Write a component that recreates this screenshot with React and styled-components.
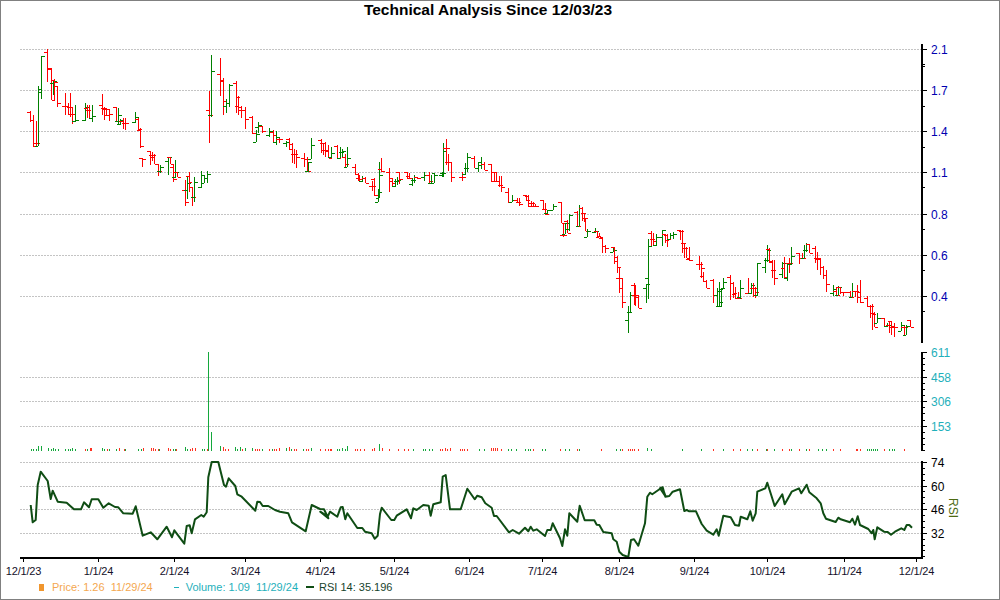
import React from "react";
import styled, { createGlobalStyle } from "styled-components";

// bars are read off 3x crops: [x, high, low, open, close], crop units
const priceCrops = [
  { ox: 0, oy: 0, bars: [
    [91,332,365,337,360],[98,345,440,360,438],[107,363,438,428,428],[113,258,438,438,268],[122,169,296,276,169],
    [142,148,245,157,205],[152,205,300,207,300],[158,243,285,250,243],[163,237,300,240,245],[172,259,320,259,310],
    [194,278,345,318,318],[203,310,345,318,322],[209,280,350,322,342],[215,322,372,342,342],[224,316,365,362,360],
    [254,310,362,360,320],[260,316,355,325,330],[267,316,357,330,355],[275,316,365,355,349],
    [305,283,345,316,325],[311,322,360,325,344],[319,325,345,328,345],[326,326,362,328,343],
    [347,320,365,320,364],[355,323,372,364,346],[361,358,375,372,360],[370,355,387,362,370],[376,355,390,370,370],
    [406,337,370,365,350],[413,355,390,357,388],[421,383,443,390,437],[427,473,500,473,476],
    [451,452,495,454,472],[457,455,482,465,465],[463,462,492,465,492],[473,492,527,492,512],[480,495,518,512,502],
    [503,470,525,482,472],[509,470,492,472,492],[518,492,545,502,537],[524,480,535,532,516],[530,516,532,516,532],
    [554,540,618,570,607],[560,530,597,569,550],[568,517,575,527,562],[575,560,617,545,592],[583,530,607,592,545],
    [604,512,563,560,525],[613,527,550,550,535],[620,512,550,535,522],[626,272,428,330,345],[634,166,350,345,214],
    [661,175,287,222,242],[670,235,345,240,303],[677,298,338,318,308],[686,252,320,308,256],
    [707,244,338,248,290],[714,288,345,318,330],[722,318,355,322,330],[736,320,387,330,358],
    [757,347,402,352,400],[767,390,427,425,402],[773,365,400,380,376],[785,378,400,378,392],
    [808,385,410,405,392],[818,390,428,397,405],[829,392,435,427,412],[838,415,428,418,418],
    [859,422,442,430,425],[868,415,450,417,432],[875,430,488,448,462],[882,448,492,462,462],[889,450,505,462,472],
    [912,460,502,475,477],[920,472,515,477,513],[925,485,515,513,485],[934,415,476,476,436],
    [962,418,458,420,430],[970,430,465,430,450],[976,425,472,450,453],[985,435,475,450,475],
  ] },
  { ox: 330, oy: 120, bars: [
    [2,82,115,112,100],[22,76,115,79,115],[31,82,115,115,95],[37,88,112,95,92],[45,102,142,112,132],[52,82,142,142,115],
    [76,133,165,142,162],[83,160,183,163,178],[87,165,183,173,183],[97,167,185,183,173],[104,172,190,175,190],
    [127,183,212,199,199],[133,175,228,178,224],[143,208,247,247,216],[148,127,233,233,166],[154,115,155,147,152],
    [178,145,215,157,175],[185,175,197,183,190],[195,178,200,197,182],[201,172,195,182,179],[207,155,192,155,178],
    [231,155,177,156,175],[237,160,177,168,175],[245,175,198,192,180],[252,165,190,180,170],[260,170,176,170,175],
    [283,157,183,172,165],[297,157,190,165,183],[304,165,190,190,160],[312,160,190,190,165],
    [335,157,172,165,160],[338,68,172,160,92],[347,58,135,83,83],[354,103,152,125,125],[362,125,185,125,172],
    [397,155,182,172,172],[404,130,165,162,143],[411,100,155,143,112],
    [433,107,143,115,143],[443,125,155,143,125],[453,112,147,135,132],[462,125,150,132,150],
    [484,133,185,133,184],[491,157,185,157,184],[498,157,185,157,184],[507,168,202,184,195],[513,167,215,195,202],
    [534,203,248,215,247],[545,225,247,247,241],[561,233,250,241,246],[566,235,258,246,251],
    [587,224,243,224,240],[595,225,260,227,257],[602,242,257,250,248],[610,245,260,250,258],[616,253,260,259,259],
    [638,241,270,241,268],[646,250,285,268,281],[652,270,283,280,270],[668,253,270,270,259],
    [692,247,308,247,308],[698,308,350,345,345],[704,308,343,343,310],[712,300,338,302,338],[718,282,332,327,285],
    [742,273,322,275,317],[748,255,318,317,263],[755,260,302,263,280],[761,280,305,280,295],[765,295,332,295,332],[770,328,352,352,332],
    [795,323,340,336,332],[800,332,350,332,347],[808,338,352,350,350],[816,355,398,355,378],[824,376,398,378,385],
    [848,383,397,397,390],[852,382,433,382,422],[860,408,458,410,440],[867,440,520,475,505],[875,475,565,475,547],
    [895,558,638,600,575],[901,515,578,575,525],[911,488,555,495,525],[916,495,558,525,530],[925,525,565,525,565],
    [947,492,548,505,492],[953,358,538,475,377],[964,333,377,338,358],[970,338,378,358,363],[977,343,377,376,352],
  ] },
  { ox: 660, oy: 220, bars: [
    [7,30,78,50,30],[15,43,70,43,60],[22,43,82,45,58],[31,38,58,58,45],[38,36,58,45,43],
    [60,30,60,31,33],[66,30,98,33,70],[72,68,115,70,85],[79,80,115,85,115],[88,82,122,118,120],
    [118,108,150,132,132],[124,125,175,132,145],[130,155,185,168,182],[139,180,205,183,203],
    [160,178,248,180,225],[170,205,260,225,212],[176,187,260,258,246],[184,205,260,258,205],[190,175,205,208,187],
    [211,165,240,170,188],[218,185,235,188,220],[225,200,238,222,235],[234,215,238,235,233],[241,180,238,232,205],
    [263,175,220,220,220],[272,188,222,220,195],[278,190,232,205,205],[286,200,233,205,215],[292,130,228,226,130],
    [316,115,160,140,120],[322,75,125,120,90],[328,85,130,86,125],[337,120,175,122,150],[343,120,195,150,175],
    [367,127,175,162,128],[373,110,175,145,172],[381,130,182,175,130],[388,115,160,128,130],[394,82,135,132,108],
    [418,98,132,100,115],[427,98,118,115,115],[433,75,115,115,90],[439,68,95,90,72],[448,72,98,73,98],
    [466,78,128,85,117],[472,97,150,115,115],[481,115,165,117,140],[490,137,178,140,165],[499,150,215,165,192],
    [520,195,228,218,208],[527,200,225,212,225],[535,198,225,225,200],[541,200,222,202,215],[550,215,228,216,216],
    [570,213,232,215,232],[577,188,232,232,212],[585,212,232,212,213],[592,195,248,213,232],[601,180,248,215,247],
    [622,228,260,235,258],[631,255,295,258,258],[637,253,330,258,282],[643,275,322,280,322],[652,278,308,308,293],
    [671,295,320,295,318],[680,310,322,318,315],[686,302,340,315,320],[692,302,345,302,318],[703,308,352,320,322],
    [724,307,332,332,315],[733,318,345,322,320],[739,315,345,345,318],[751,300,322,300,322],
  ] },
];

// g/r + crop x, optional :height in px
const volumeCrops = [
  { ox: 0, list: "g92 g98 g107 g113:5 g122:5 g143:3 g152 g158:3 g164 g173 g194 g203 g209 g215:3 g224 r254 g260 r269:3 r274:3 g305:3 g311 r320 g326 g347 r356:3 r371 g376 g413 g422 r428:3 r452:3 r458:3 r464 r473 g478 r503:3 r509 g518 g524 r529 g554:4 g560 r569 r575:3 r584:3 g605 g611 r620 g625:99 g634:19 g661:5 r670:4 r676 r685 g706:4 g712 g721:4 r727 g736:3 g757:3 r766 r772 r778 g787 r808 g817 r823 r829 r838:3 g859:3 r868:4 g874 r883 r889 g910 r919 r925 g934:3 r961 r976 r985 r991 g1012" },
  { ox: 330, list: "r2 g22 g28 g37:3 g46 g52:5 r76 r82 r91 r103 r127:2 r133:3 g148:7 r155:3 r178 r205 r223 r235 g250 g280 g286 g298 g307 r331 r337 r346:3 r352 r361:3 r391 r397 r403 r412 g448 g463 r484:3 r490:3 r496:3 r502:3 r514 g535 g544 g559 g586 g595 g601 r610 g637 g646 r691 g706 g718 r742 g748 r814 g859 g871 r877 r895 r901 r907 r913 r925 g952:3 g964:2" },
  { ox: 660, list: "g67 g124 r160 g190 r220 r241 g262 g277 r292 g317 r322 g343 r367 r388 g394 r418 g439 r448 g475 g487 g499 r520 r541 r587 r592 r601 g622 g628 g634 g640 g646 g652 r673 g688 g697 g703 r733" },
];

const rsiCrops = [
  { ox: 0, pts: [[92,195],[98,247],[107,240],[113,135],[122,95],[143,123],[152,177],[158,152],[173,185],[200,188],[210,197],[222,208],[243,208],[252,187],[267,202],[275,178],[295,178],[310,203],[326,190],[345,201],[355,202],[370,220],[398,221],[407,199],[428,287],[452,277],[472,298],[500,260],[516,292],[523,271],[553,311],[560,258],[569,256],[575,280],[585,238],[604,225],[611,230],[620,217],[625,112],[635,66],[655,66],[672,135],[678,140],[686,115],[706,138],[712,163],[725,170],[766,212],[772,185],[780,186],[788,198],[805,198],[825,210],[840,215],[865,220],[876,247],[917,274],[935,195],[960,207],[972,208],[985,235]] },
  { ox: 330, pts: [[-29,215],[-7,230],[0,215],[22,230],[32,202],[38,201],[46,238],[52,220],[82,264],[97,264],[105,275],[125,280],[134,296],[143,287],[150,222],[155,203],[184,240],[193,240],[200,227],[230,208],[243,235],[250,205],[260,210],[280,195],[296,197],[302,227],[310,193],[332,187],[338,110],[347,105],[360,208],[392,208],[412,146],[434,178],[442,167],[455,172],[466,190],[485,203],[492,228],[500,228],[537,277],[548,270],[567,281],[585,263],[595,274],[602,260],[610,272],[620,268],[645,288],[652,270],[662,270],[668,250],[690,295],[697,318],[705,268],[712,287],[718,220],[742,245],[749,197],[764,241],[793,241],[800,254],[808,255],[820,276],[845,280],[850,298],[860,305],[868,335],[878,345],[895,351],[903,300],[912,298],[925,317],[945,250],[952,170],[960,158],[967,163],[997,142],[1007,170]] },
  { ox: 660, pts: [[0,145],[8,142],[16,170],[28,168],[38,155],[60,148],[73,213],[80,210],[88,214],[108,214],[125,252],[140,272],[160,284],[170,268],[176,287],[190,227],[212,232],[225,255],[237,257],[242,230],[262,238],[271,214],[278,242],[287,220],[292,155],[316,145],[322,128],[344,198],[367,163],[374,193],[395,155],[417,145],[424,160],[440,134],[448,157],[470,175],[482,190],[490,220],[498,236],[527,246],[535,233],[542,238],[570,247],[577,236],[585,254],[593,229],[600,255],[625,267],[635,280],[640,270],[644,298],[652,262],[672,275],[683,276],[693,284],[705,275],[724,265],[733,270],[740,255],[748,255],[756,263]] },
];

const dates = [
  ["12/1/23", 23], ["1/1/24", 98], ["2/1/24", 174], ["3/1/24", 245], ["4/1/24", 320], ["5/1/24", 394], ["6/1/24", 469],
  ["7/1/24", 542], ["8/1/24", 619], ["9/1/24", 694], ["10/1/24", 767], ["11/1/24", 844], ["12/1/24", 916],
];

const AXIS_X = 921;

const GlobalStyle = createGlobalStyle`
  html, body {
    margin: 0;
    background: #fff;
  }
`;

const Frame = styled.div`
  box-sizing: border-box;
  width: 1000px;
  height: 600px;
  border: 1px solid #808080;
  display: flex;
  flex-direction: column;
  background: #fff;
  font-family: "Liberation Sans", Arial, sans-serif;
  overflow: hidden;
`;

const Title = styled.h1`
  margin: 0;
  height: 19px;
  padding-right: 24px;
  font-size: 15.5px;
  line-height: 18px;
  font-weight: bold;
  text-align: center;
  color: #000;
`;

const Pane = styled.svg`
  display: block;
  width: 998px;
  flex: none;
  font-family: "Liberation Sans", Arial, sans-serif;
`;

const AxisLabel = styled.text`
  font-size: 12px;
  fill: ${(p) => p.$color};
`;

const DateLabel = styled.text`
  font-size: 11px;
  letter-spacing: -0.2px;
  text-anchor: middle;
  fill: #14102a;
`;

const SideLabel = styled.text`
  font-size: 12px;
  text-anchor: middle;
  fill: #4d6a12;
`;

const Legend = styled.div`
  flex: 1;
  display: flex;
  align-items: center;
  gap: 7px;
  padding: 0 0 3px 38px;
  font-size: 11px;
  white-space: pre;
`;

const LegendItem = styled.div`
  display: flex;
  align-items: center;
  gap: ${(p) => p.$gap}px;
  margin-right: ${(p) => p.$right || 0}px;
  color: ${(p) => p.$color};
`;

const Swatch = styled.span`
  display: block;
  width: ${(p) => p.$w}px;
  height: ${(p) => p.$h}px;
  background: ${(p) => p.$color};
`;

function GridLines({ ys }) {
  return ys.map((y) => (
    <line key={y} x1={20} x2={AXIS_X} y1={y + 0.5} y2={y + 0.5} stroke="#c4c4c4" strokeDasharray="2 1" />
  ));
}

function YAxis({ top, bottom, majors, minors, color }) {
  return (
    <g shapeRendering="crispEdges">
      <rect x={AXIS_X} y={top} width={2} height={bottom - top} fill="#000" />
      {minors.map((y) => (
        <rect key={y} x={AXIS_X} y={Math.round(y)} width={4} height={1} fill="#000" />
      ))}
      {majors.map(([label, y]) => (
        <g key={label}>
          <rect x={AXIS_X} y={y} width={6} height={1} fill="#000" />
          <AxisLabel x={931} y={y + 4.5} $color={color}>{label}</AxisLabel>
        </g>
      ))}
    </g>
  );
}

function PriceBar({ x, high, low, open, close }) {
  const color = close < open ? "#008000" : "#ff0000";
  return (
    <g fill={color}>
      <rect x={x} y={high} width={1} height={Math.max(low - high, 1)} />
      <rect x={x - 3} y={open} width={3} height={1} />
      <rect x={x + 1} y={close} width={3} height={1} />
    </g>
  );
}

const priceBars = priceCrops.flatMap(({ ox, oy, bars }) =>
  bars.map(([x, hi, lo, o, c]) => ({
    x: Math.round(ox + x / 3),
    high: Math.round(oy + hi / 3),
    low: Math.round(oy + lo / 3),
    open: Math.round(oy + o / 3),
    close: Math.round(oy + c / 3),
  }))
);

const volumeBars = volumeCrops.flatMap(({ ox, list }) =>
  list.split(" ").map((item) => {
    const [pos, h] = item.slice(1).split(":");
    return { x: Math.round(ox + Number(pos) / 3), color: item[0] === "g" ? "#14a83c" : "#ff3020", h: Number(h || 2) };
  })
);

const rsiPoints = rsiCrops
  .flatMap(({ ox, pts }) => pts.map(([x, y]) => `${(ox + x / 3).toFixed(1)},${(440 + y / 3).toFixed(1)}`))
  .join(" ");

function evenly(from, to, step) {
  const out = [];
  for (let y = from; y < to; y += step) out.push(y);
  return out;
}

export default function App() {
  return (
    <Frame>
      <GlobalStyle />
      <Title>Technical Analysis Since 12/03/23</Title>
      <Pane viewBox="1 20 998 325" height={325}>
        <GridLines ys={[49, 90, 131, 172, 214, 255, 296]} />
        <YAxis
          top={44}
          bottom={343}
          color="#0000b0"
          majors={[["2.1", 49], ["1.7", 90], ["1.4", 131], ["1.1", 172], ["0.8", 214], ["0.6", 255], ["0.4", 296]]}
          minors={[64, 66, 106, 147, 187, 229, 270, 311]}
        />
        <g shapeRendering="crispEdges">
          {priceBars.map((b, i) => (
            <PriceBar key={i} {...b} />
          ))}
        </g>
      </Pane>
      <Pane viewBox="1 345 998 110" height={110}>
        <GridLines ys={[377, 401, 426]} />
        <YAxis
          top={352}
          bottom={451}
          color="#1fb0bb"
          majors={[["611", 352], ["458", 377], ["306", 401], ["153", 426]]}
          minors={evenly(352, 451, 6.15)}
        />
        <g shapeRendering="crispEdges">
          {volumeBars.map((b, i) => (
            <rect key={i} x={b.x} y={451 - b.h} width={1} height={b.h} fill={b.color} />
          ))}
        </g>
      </Pane>
      <Pane viewBox="1 455 998 123" height={123}>
        <GridLines ys={[462, 486, 509, 533]} />
        <YAxis
          top={461}
          bottom={559}
          color="#000"
          majors={[["74", 462], ["60", 486], ["46", 509], ["32", 533]]}
          minors={evenly(462, 557, 5.9)}
        />
        <polyline points={rsiPoints} fill="none" stroke="#0f4d14" strokeWidth={2} strokeLinejoin="round" />
        <rect x={20} y={557} width={903} height={2} fill="#000" shapeRendering="crispEdges" />
        {dates.map(([label, x]) => (
          <g key={label}>
            <rect x={x} y={559} width={1} height={3} fill="#000" shapeRendering="crispEdges" />
            <DateLabel x={x + 0.5} y={575}>{label}</DateLabel>
          </g>
        ))}
        <SideLabel x={0} y={0} transform="translate(949 508) rotate(90)">RSI</SideLabel>
      </Pane>
      <Legend>
        <LegendItem $gap={8} $color="#f4a750" $right={14}>
          <Swatch $w={5} $h={7} $color="#f0962e" />
          {"Price: 1.26  11/29/24"}
        </LegendItem>
        <LegendItem $gap={7} $color="#1fb0bb" $right={1}>
          <Swatch $w={5} $h={1} $color="#1fb0bb" />
          {"Volume: 1.09  11/29/24"}
        </LegendItem>
        <LegendItem $gap={5} $color="#17432c">
          <Swatch $w={8} $h={2} $color="#0f4d14" />
          {"RSI 14: 35.196"}
        </LegendItem>
      </Legend>
    </Frame>
  );
}
